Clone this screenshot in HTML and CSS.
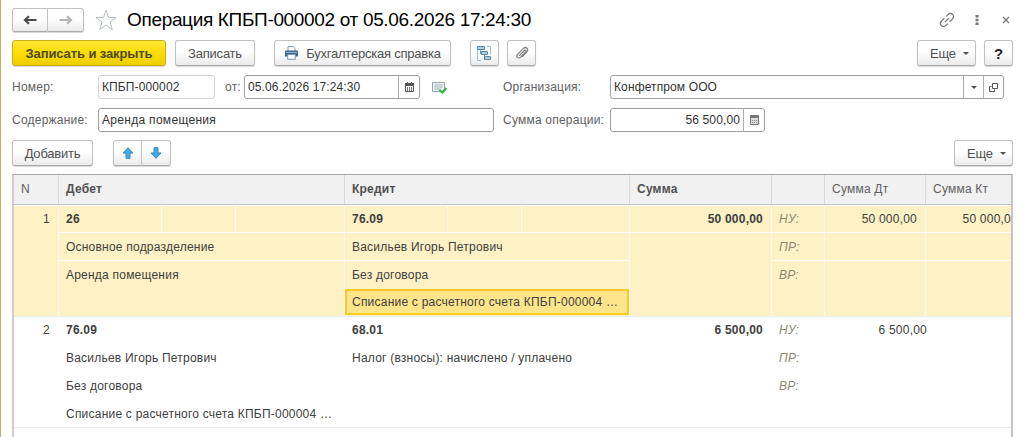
FILE: index.html
```
<!DOCTYPE html>
<html lang="ru">
  <head>
    <meta charset="UTF-8" />
    <meta name="viewport" content="width=device-width, initial-scale=1.0" />
    <title>Операция КПБП-000002</title>
    <link rel="stylesheet" href="styles.css">
  </head>
  <body>
    <div class="window">
      <header class="title-row">
        <div class="btn-pair nav">
          <button><svg width="14" height="10" viewBox="0 0 14 10"><path d="M13.500 5H3M6 1.200L2 5l4 3.800" fill="none" stroke="#4a4a4a" stroke-width="2.200" /></svg></button>
          <button><svg width="14" height="10" viewBox="0 0 14 10"><path d="M.5 5H11M8 1.200L12 5 8 8.800" fill="none" stroke="#b4b4b4" stroke-width="2.100" /></svg></button>
        </div>
        <svg class="star" width="22" height="22" viewBox="0 0 22 22"><path d="M11 1.200l2.500 7.300h7.600l-6.100 4.600 2.300 7.400-6.300-4.500-6.300 4.500L7 13.100.9 8.500h7.600z" fill="#fff" stroke="#b3bcc7" stroke-width="1" /></svg>
        <h1>Операция КПБП-000002 от 05.06.2026 17:24:30</h1>
        <div class="win-icons">
          <svg width="16" height="16" viewBox="0 0 16 16"><g transform="rotate(-45 8 8)" fill="none" stroke="#777" stroke-width="1.300"><path d="M7.500 4.900H3.200a3.100 3.100 0 0 0 0 6.200H6M8.500 11.100h4.300a3.100 3.100 0 0 0 0-6.200H10M5 8h6" /></g></svg>
          <svg width="4" height="12" viewBox="0 0 4 12"><path d="M.5 1h3v2.400h-3zM.5 4.800h3v2.400h-3zM.5 8.600h3V11h-3z" fill="#777" /></svg>
          <svg width="8" height="8" viewBox="0 0 8 8"><path d="M1 1l6 6M7 1L1 7" stroke="#777" stroke-width="1.300" /></svg>
        </div>
      </header>

      <div class="toolbar">
        <button class="btn main">Записать и закрыть</button>
        <button class="btn save">Записать</button>
        <button class="btn report">
          <svg width="15" height="14" viewBox="0 0 15 14"><path d="M4 5V.6h5.200L11 2.400V5" fill="#fff" stroke="#7c98ae" /><path d="M1 5.500q0-1 1-1h11q1 0 1 1v5H1z" fill="#41698c" /><path d="M2 6.500h11" stroke="#8fb0ca" /><path d="M3.700 8.500h7.600v4.800H3.700z" fill="#fff" stroke="#7c98ae" /></svg>
          <span>Бухгалтерская справка</span>
        </button>
        <button class="btn icon structure">
          <svg width="15" height="15" viewBox="0 0 15 15"><path d="M3 3.500H.5v11H4M10 .5h3.500V9" fill="none" stroke="#9dbdd4" /><path d="M3.500 4.500v3H5M7.500 9v3H8" fill="none" stroke="#5b88aa" /><path d="M.5.500h7v3h-7zM4.500 5.500h6v3h-6zM7.500 10.500h6v3h-6z" fill="#a9cce4" stroke="#5b88aa" /></svg>
        </button>
        <button class="btn icon">
          <svg width="14" height="14" viewBox="0 0 14 14"><path d="M4.300 9.600l5-5.100c1-1 2.400.3 1.400 1.400l-5.400 5.400c-2 2-4.900-.8-2.800-2.900l5.700-5.800c2.800-2.700 6.300.7 3.500 3.500l-4.600 4.700" fill="none" stroke="#808080" stroke-width="1.200" /></svg>
        </button>
        <button class="btn more">Еще<i class="caret"></i></button>
        <button class="btn icon help">?</button>
      </div>

      <div class="fields">
        <label class="l-left">Номер:</label>
        <div class="field number">КПБП-000002</div>
        <label class="l-from">от:</label>
        <div class="field date">
          <span>05.06.2026 17:24:30</span>
          <b><svg width="9" height="10" viewBox="0 0 9 10"><path d="M.5 2h8v7.500h-8z" fill="#fff" stroke="#555" /><path d="M0 1h9v3H0z" fill="#555" /><path d="M2.500 0v2M6.500 0v2" stroke="#555" /><path d="M2.500 5v4M4.500 5v4M6.500 5v4" stroke="#777" /></svg></b>
        </div>
        <svg class="posted" width="15" height="13" viewBox="0 0 15 13"><path d="M.5 1.500h12v9H.5z" fill="#eef2f5" stroke="#94a4b2" /><path d="M2.500 4h8M2.500 6h8M2.500 8h6" stroke="#a3b1bd" /><path d="M7.500 9l2.800 2.500L14.300 7" fill="none" stroke="#35b44a" stroke-width="2.300" /></svg>
        <label class="l-right">Организация:</label>
        <div class="field org">
          <span>Конфетпром ООО</span>
          <b><i class="caret small"></i></b>
          <b><svg width="9" height="9" viewBox="0 0 9 9"><path d="M3.500.5h5v5h-5zM2.500 3.500h-2v5h5v-2" fill="none" stroke="#555" /></svg></b>
        </div>
      </div>

      <div class="fields">
        <label class="l-left">Содержание:</label>
        <div class="field content">Аренда помещения</div>
        <label class="l-right">Сумма операции:</label>
        <div class="field sum">
          <span>56 500,00</span>
          <b><svg width="9" height="10" viewBox="0 0 9 10"><path d="M.5.5h8v9h-8z" fill="#ddd" stroke="#777" /><path d="M1 1h7v2H1z" fill="#777" /><path d="M2 5.500h5M2 7.500h5" stroke="#888" stroke-dasharray="1 1" /></svg></b>
        </div>
      </div>

      <div class="toolbar second">
        <button class="btn add">Добавить</button>
        <div class="btn-pair move">
          <button><svg width="12" height="12" viewBox="0 0 12 12"><path d="M6 .7l5 5.300H8v5.300H4V6H1z" fill="#41abe6" stroke="#3688b8" /></svg></button>
          <button><svg width="12" height="12" viewBox="0 0 12 12"><path d="M6 11.300L1 6h3V.7h4V6h3z" fill="#41abe6" stroke="#3688b8" /></svg></button>
        </div>
        <button class="btn more">Еще<i class="caret"></i></button>
      </div>

      <main class="table">
        <div class="row head">
          <div>N</div>
          <div><strong>Дебет</strong></div>
          <div><strong>Кредит</strong></div>
          <div><strong>Сумма</strong></div>
          <div></div>
          <div>Сумма Дт</div>
          <div>Сумма Кт</div>
        </div>

        <div class="row entry selected">
          <div class="num"><p>1</p></div>
          <div class="account">
            <div class="codes"><p><strong>26</strong></p><p></p><p></p></div>
            <p>Основное подразделение</p>
            <p class="open">Аренда помещения</p>
          </div>
          <div class="account">
            <div class="codes"><p><strong>76.09</strong></p><p></p><p></p></div>
            <p>Васильев Игорь Петрович</p>
            <p class="open">Без договора</p>
            <p class="current">Списание с расчетного счета КПБП-000004 …</p>
          </div>
          <div class="num"><p><strong>50 000,00</strong></p></div>
          <div class="kind"><p>НУ:</p><p>ПР:</p><p class="open">ВР:</p></div>
          <div class="num"><p>50 000,00</p><p></p></div>
          <div class="num last"><p>50 000,0</p><p></p></div>
        </div>

        <div class="row entry">
          <div class="num"><p>2</p></div>
          <div class="account">
            <p><strong>76.09</strong></p>
            <p>Васильев Игорь Петрович</p>
            <p>Без договора</p>
            <p>Списание с расчетного счета КПБП-000004 …</p>
          </div>
          <div class="account">
            <p><strong>68.01</strong></p>
            <p>Налог (взносы): начислено / уплачено</p>
          </div>
          <div class="num"><p><strong>6 500,00</strong></p></div>
          <div class="kind"><p>НУ:</p><p>ПР:</p><p>ВР:</p></div>
          <div class="num wide"><p>6 500,00</p></div>
          <div></div>
        </div>
      </main>
    </div>
  </body>
</html>
```

FILE: styles.css
```
* {
  box-sizing: border-box;
}
body {
  margin: 0;
  background-color: #fff;
  font-family: "Liberation Sans", Arial, sans-serif;
  font-size: 12px;
  letter-spacing: 0.22px;
  color: #404040;
}
p, h1 {
  margin: 0;
}
svg {
  display: block;
  flex: none;
}
.window {
  height: 437px;
  overflow: hidden;
  border-left: 1px solid #c3b061;
  padding: 7px 11px 0 11px;
}

.title-row {
  display: flex;
  align-items: center;
  height: 25px;
  margin-bottom: 8px;
}
.star {
  margin: 0 0 0 11px;
}
h1 {
  margin-left: 10px;
  font-size: 19px;
  font-weight: normal;
  letter-spacing: -0.33px;
  color: #000;
}
.win-icons {
  display: flex;
  align-items: center;
  margin-left: auto;
  padding-right: 3px;
}
.win-icons svg:nth-child(2) {
  margin: 0 23px 0 20px;
}

button {
  display: flex;
  align-items: center;
  justify-content: center;
  border: 1px solid #c0c0c0;
  border-bottom-color: #a9a9a9;
  border-radius: 3px;
  padding: 0;
  background: linear-gradient(#fff, #fff 45%, #ebebeb);
  box-shadow: 0 1px 1px #d5d5d5;
  font: inherit;
  letter-spacing: inherit;
  color: #505050;
}
.btn {
  height: 26px;
  font-size: 13px;
  letter-spacing: -0.22px;
}
.btn-pair {
  display: flex;
}
.btn-pair button:first-child {
  border-radius: 3px 0 0 3px;
}
.btn-pair button:last-child {
  border-left: 0;
  border-radius: 0 3px 3px 0;
}
.nav button {
  width: 36px;
  height: 24px;
}
.toolbar {
  display: flex;
  height: 26px;
  margin-bottom: 9px;
}
.main {
  width: 154px;
  border-color: #c9ae12;
  background: linear-gradient(#ffe838, #fadd00 50%, #efcf00);
  font-weight: bold;
  letter-spacing: -0.1px;
  color: #504a1c;
}
.save {
  width: 80px;
  margin-left: 9px;
}
.report {
  width: 177px;
  margin-left: 19px;
  gap: 7px;
}
.icon {
  width: 29px;
  margin-left: 8px;
}
.structure {
  margin-left: 19px;
}
.more {
  width: 59px;
  margin-left: auto;
  padding-left: 6px;
}
.help {
  font-size: 15px;
  font-weight: bold;
  color: #222;
}
.caret {
  margin-left: 7px;
  border: 3px solid transparent;
  border-top-color: #505050;
  border-bottom: 0;
}
.caret.small {
  margin: 0;
}

.fields {
  display: flex;
  align-items: center;
  height: 24px;
  margin-bottom: 9px;
  color: #606060;
}
.fields + .fields {
  margin-bottom: 8px;
}
.field {
  display: flex;
  align-items: center;
  height: 24px;
  border: 1px solid #a0a0a0;
  border-radius: 3px;
  padding-left: 3px;
  letter-spacing: 0.12px;
  color: #333;
}
.field span {
  flex: 1;
}
.field b {
  display: flex;
  align-items: center;
  justify-content: center;
  width: 21px;
  height: 22px;
  border-left: 1px solid #b0b0b0;
}
.l-left {
  width: 86px;
}
.number {
  width: 117px;
  border-color: #d5d5d5;
}
.l-from {
  width: 29px;
  padding-left: 10px;
}
.date {
  width: 176px;
}
.posted {
  margin-left: 12px;
}
.l-right {
  width: 107px;
}
.posted + .l-right {
  margin-left: 56px;
}
.org {
  flex: 1;
  margin-right: 9px;
}
.org b {
  width: 20px;
}
.content {
  width: 396px;
  margin-right: 9px;
  letter-spacing: 0.3px;
}
.sum {
  width: 155px;
  text-align: right;
}
.sum span {
  padding-right: 3px;
}
.add {
  width: 81px;
}
.second {
  margin-bottom: 8px;
}
.move {
  margin-left: 20px;
}
.move button {
  width: 29px;
  height: 26px;
}

.table {
  width: 1001px;
  height: 270px;
  border: 2px solid #c4c4c4;
  border-top: 1px solid #a8a8a8;
  border-left-color: #cdcdcd;
}
.row {
  display: grid;
  grid-template-columns: 45px 286px 285px 142px 53px 101px 1fr;
}
.head {
  height: 30px;
  border-bottom: 1px solid #c4c4c4;
  background-color: #f1f1f1;
  color: #606060;
}
.head > div {
  border-right: 1px solid #d8d8d8;
  padding: 7px 0 0 7px;
}
.head > div:last-child {
  border-right: 0;
}
.head strong {
  color: #505050;
}
.entry {
  height: 111px;
  border-bottom: 1px solid #ebebeb;
}
.entry > div {
  min-width: 0;
  border-right: 1px solid transparent;
}
.entry p {
  height: 28px;
  border-bottom: 1px solid transparent;
  padding: 6px 0 0 7px;
  white-space: nowrap;
}
.num {
  text-align: right;
}
.entry .num p {
  padding-right: 8px;
}
.entry .wide p {
  margin-right: -2px;
  padding-right: 0;
}
.kind {
  font-style: italic;
  color: #8c8872;
}
.codes {
  display: grid;
  grid-template-columns: 103px 74px 1fr;
}
.codes p {
  border-right: 1px solid #fffaf0;
}
.codes p:last-child {
  border-right: 0;
}
.selected {
  height: 112px;
  background-color: #fdf1c5;
  box-shadow: inset 0 1px #fff;
}
.selected > div {
  border-right-color: #fffaf0;
}
.selected p {
  border-bottom-color: #fffdf6;
  padding-top: 7px;
}
.selected .num:first-child p,
.selected .open {
  border-bottom-color: transparent;
}
.entry .last {
  border-right: 0;
}
.entry .last p {
  padding-right: 0;
}
.entry .current {
  height: 26px;
  border: 2px solid #f9c926;
  padding: 4px 0 0 5px;
  background-color: #fee48b;
}
```
